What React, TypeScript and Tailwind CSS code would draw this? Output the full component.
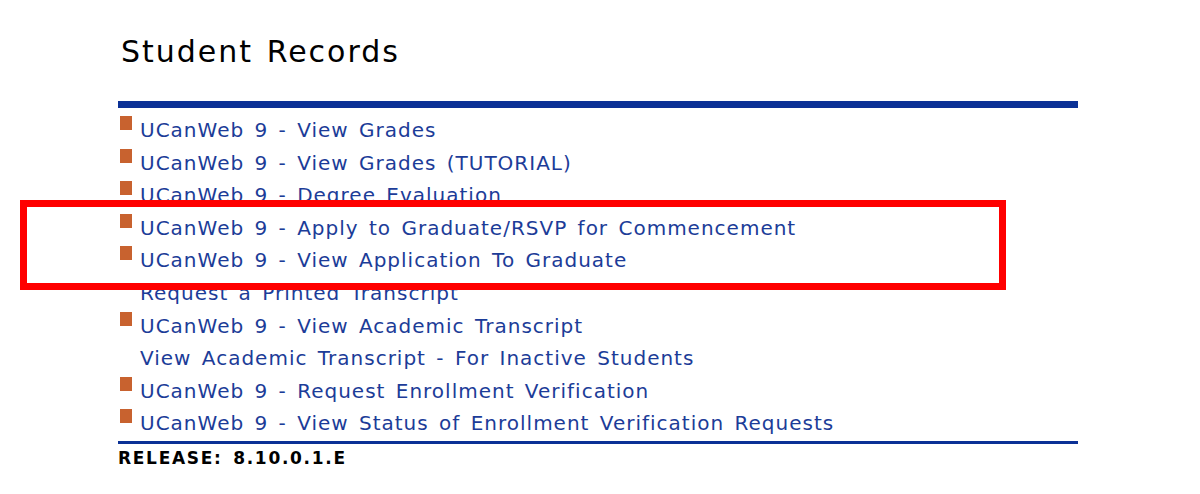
import React from 'react';

type RecordLink = {
  label: string;
  bullet: boolean;
};

const links: RecordLink[] = [
  { label: 'UCanWeb 9 - View Grades', bullet: true },
  { label: 'UCanWeb 9 - View Grades (TUTORIAL)', bullet: true },
  { label: 'UCanWeb 9 - Degree Evaluation', bullet: true },
  { label: 'UCanWeb 9 - Apply to Graduate/RSVP for Commencement', bullet: true },
  { label: 'UCanWeb 9 - View Application To Graduate', bullet: true },
  { label: 'Request a Printed Transcript', bullet: false },
  { label: 'UCanWeb 9 - View Academic Transcript', bullet: true },
  { label: 'View Academic Transcript - For Inactive Students', bullet: false },
  { label: 'UCanWeb 9 - Request Enrollment Verification', bullet: true },
  { label: 'UCanWeb 9 - View Status of Enrollment Verification Requests', bullet: true },
];

export default function App() {
  return (
    <div
      className="relative w-[1200px] h-[494px] bg-white overflow-hidden"
      style={{ fontFamily: '"DejaVu Sans", Verdana, sans-serif' }}
    >
      <div className="ml-[118px] w-[960px] pt-[34px]">
        <h1 className="text-[30px] leading-9 font-normal text-black pl-[3px] tracking-[2px] [word-spacing:2px]">
          Student Records
        </h1>

        <div className="mt-[31px] h-[7px] bg-[#0b3196]" />

        <ul className="mt-[6px]">
          {links.map((link) => (
            <li key={link.label} className="flex items-start h-[32.6px]">
              <span className="w-[22px] shrink-0 pt-[2px] pl-[2px]">
                {link.bullet && <span className="block w-[12px] h-[14px] bg-[#c8622f]" />}
              </span>
              <a className="text-[20px] leading-[32.6px] tracking-[1px] [word-spacing:3px] text-[#1c3c98] whitespace-nowrap cursor-pointer">
                {link.label}
              </a>
            </li>
          ))}
        </ul>

        <div className="mt-[1px] h-[3px] bg-[#0b3196]" />

        <div className="mt-[4px] text-[17px] leading-5 font-bold tracking-[1.7px] [word-spacing:3px] text-black">
          RELEASE: 8.10.0.1.E
        </div>
      </div>

      {/* annotation box drawn over the list */}
      <div className="absolute left-[20px] top-[200px] w-[986px] h-[90px] border-[7px] border-[#ff0000]" />
    </div>
  );
}
